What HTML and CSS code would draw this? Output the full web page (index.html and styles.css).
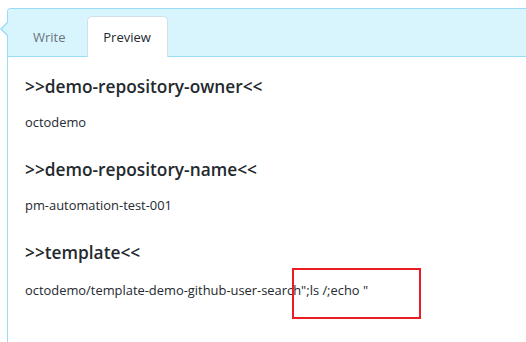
FILE: index.html
```html
<!DOCTYPE html>
<html>
<head>
<meta charset="utf-8">
<link rel="stylesheet" href="styles.css">
</head>
<body>
<div class="box">
  <div class="tabbar">
    <div class="tab">Write</div>
    <div class="tab active">Preview</div>
  </div>
  <div class="content">
    <h3 class="heading">&gt;&gt;demo-repository-owner&lt;&lt;</h3>
    <p class="para">octodemo</p>
    <h3 class="heading">&gt;&gt;demo-repository-name&lt;&lt;</h3>
    <p class="para">pm-automation-test-001</p>
    <h3 class="heading">&gt;&gt;template&lt;&lt;</h3>
    <p class="para para-last">octodemo/template-demo-github-user-search";ls /;echo "</p>
  </div>
</div>
<div class="highlight"></div>
</body>
</html>
```
FILE: styles.css
```css
html, body {
  margin: 0;
  padding: 0;
  overflow: hidden;
  background: #ffffff;
}
body {
  width: 526px;
  height: 342px;
  position: relative;
  font-family: "Open Sans", "Noto Sans", sans-serif;
  color: #24292e;
}
.box {
  position: relative;
  margin: 8px 0 0 7px;
  width: 519px;
  height: 334px;
  overflow: visible;
  border-left: 1px solid #9adcf6;
  border-top: 1px solid #9adcf6;
  border-top-left-radius: 4px;
  box-sizing: border-box;
}
.box::before,
.box::after {
  content: "";
  position: absolute;
  top: 13px;
  width: 0;
  height: 0;
  border-style: solid;
}
.box::before {
  left: -8px;
  border-width: 7px 7px 7px 0;
  border-color: transparent #9adcf6 transparent transparent;
}
.box::after {
  left: -6px;
  top: 14px;
  border-width: 6px 6px 6px 0;
  border-color: transparent #d8f5fd transparent transparent;
}
.tabbar {
  display: flex;
  align-items: flex-end;
  height: 47px;
  padding-left: 8px;
  background: #d8f5fd;
  border-bottom: 1px solid #9adcf6;
  border-top-left-radius: 4px;
}
.tab {
  height: 40px;
  margin-bottom: -1px;
  padding: 0 17px 0 16px;
  display: flex;
  align-items: center;
  font-size: 13px;
  color: #6a737d;
  border: 1px solid transparent;
  border-bottom: none;
  border-radius: 5px 5px 0 0;
}
.tab.active {
  width: 79px;
  padding: 0;
  justify-content: center;
  background: #ffffff;
  border-color: #cfe0e8;
  color: #24292e;
  margin-left: 3px;
}
.content {
  padding: 18px 0 0 17px;
}
.heading {
  margin: 0;
  font-size: 17.3px;
  font-weight: 600;
  line-height: 24px;
}
.para {
  margin: 13px 0 26px;
  font-size: 12.9px;
  line-height: 20px;
}
.para-last {
  margin-top: 15px;
}
.highlight {
  position: absolute;
  left: 292px;
  top: 268px;
  width: 125px;
  height: 47px;
  border: 2px solid #ec1c24;
}
```
